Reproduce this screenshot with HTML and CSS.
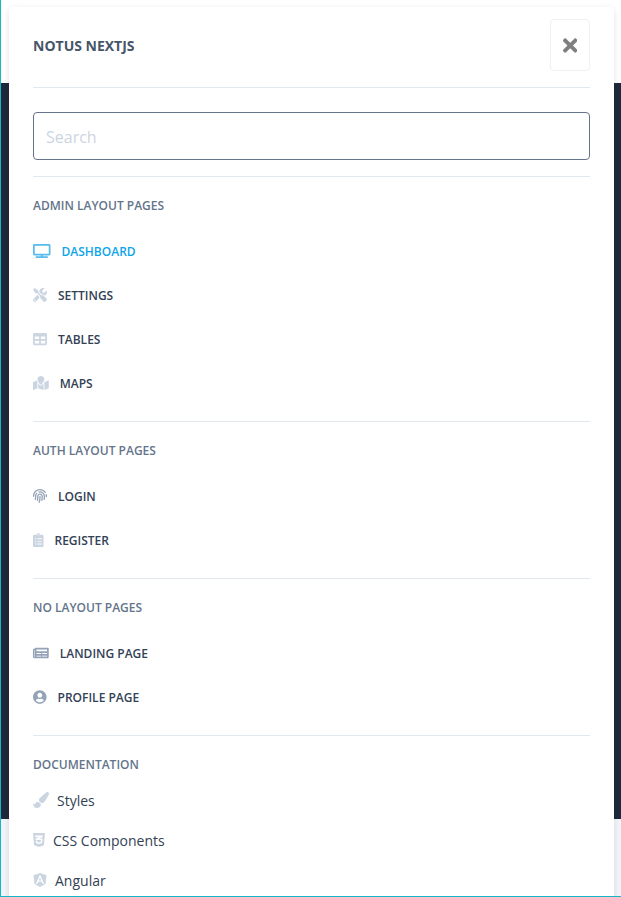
FILE: index.html
```html
<!DOCTYPE html>
<html lang="en">
<head>
<meta charset="utf-8">
<meta name="viewport" content="width=device-width, initial-scale=1">
<title>Notus NextJS</title>
<link rel="stylesheet" href="styles.css">
</head>
<body>
<div class="frame">
  <div class="topbar"></div>
  <div class="hero"></div>
  <nav class="panel" aria-label="Main">
    <header class="panel-header">
      <a class="brand" href="#">Notus NextJS</a>
      <button class="close" type="button" aria-label="Close menu">
        <svg viewBox="0 0 352 512"><path d="M242.72 256l100.07-100.07c12.28-12.28 12.28-32.19 0-44.48l-22.24-22.24c-12.28-12.28-32.19-12.28-44.48 0L176 189.28 75.93 89.21c-12.28-12.28-32.19-12.28-44.48 0L9.21 111.45c-12.28 12.28-12.28 32.19 0 44.48L109.28 256 9.21 356.07c-12.28 12.28-12.28 32.19 0 44.48l22.24 22.24c12.28 12.28 32.2 12.28 44.48 0L176 322.72l100.07 100.07c12.28 12.28 32.2 12.28 44.48 0l22.24-22.24c12.28-12.28 12.28-32.19 0-44.48L242.72 256z"/></svg>
      </button>
    </header>
    <form class="search">
      <input type="text" placeholder="Search" aria-label="Search">
    </form>

    <section class="group">
      <h6>Admin Layout Pages</h6>
      <ul class="links">
        <li><a class="active" href="#">
          <svg viewBox="0 0 640 512"><path d="M592 0H48A48 48 0 0 0 0 48v320a48 48 0 0 0 48 48h240v32H112a16 16 0 0 0-16 16v32a16 16 0 0 0 16 16h416a16 16 0 0 0 16-16v-32a16 16 0 0 0-16-16H352v-32h240a48 48 0 0 0 48-48V48a48 48 0 0 0-48-48zm-16 352H64V64h512z"/></svg>
          Dashboard</a></li>
        <li><a href="#">
          <svg viewBox="0 0 512 512"><path d="M501.1 395.7L384 278.6c-23.1-23.1-57.6-27.6-85.4-13.9L192 158.1V96L64 0 0 64l96 128h62.1l106.6 106.6c-13.6 27.8-9.2 62.3 13.9 85.4l117.1 117.1c14.6 14.6 38.2 14.6 52.7 0l52.7-52.7c14.5-14.6 14.5-38.2 0-52.7zM331.7 225c28.3 0 54.9 11 74.9 31l19.4 19.4c15.8-6.9 30.8-16.5 43.8-29.5 37.1-37.1 49.7-89.3 37.9-136.7-2.2-9-13.5-12.1-20.1-5.5l-74.4 74.4-67.9-11.3L334 98.9l74.4-74.4c6.6-6.6 3.4-17.9-5.7-20.2-47.4-11.7-99.6.9-136.6 37.9-28.5 28.5-41.9 66.1-41.2 103.6l82.1 82.1c8.1-1.9 16.5-2.9 24.7-2.9zm-103.9 82l-56.7-56.7L18.7 402.8c-25 25-25 65.5 0 90.5s65.5 25 90.5 0l123.6-123.6c-7.6-19.9-9.9-41.6-5-62.7zM64 472c-13.2 0-24-10.8-24-24 0-13.3 10.7-24 24-24s24 10.7 24 24c0 13.2-10.7 24-24 24z"/></svg>
          Settings</a></li>
        <li><a href="#">
          <svg viewBox="0 0 512 512"><path d="M464 32H48C21.49 32 0 53.49 0 80v352c0 26.51 21.49 48 48 48h416c26.51 0 48-21.49 48-48V80c0-26.51-21.49-48-48-48zM224 416H64v-96h160v96zm0-160H64v-96h160v96zm224 160H288v-96h160v96zm0-160H288v-96h160v96z"/></svg>
          Tables</a></li>
        <li><a href="#">
          <svg viewBox="0 0 576 512"><path d="M288 0c-69.59 0-126 56.41-126 126 0 56.26 82.35 158.8 113.9 196.02 6.39 7.54 17.82 7.54 24.2 0C331.65 284.8 414 182.26 414 126 414 56.41 357.59 0 288 0zM20.12 215.95A32.006 32.006 0 0 0 0 245.66v250.32c0 11.32 11.43 19.06 21.94 14.86L160 448V214.92c-8.84-15.98-16.07-31.54-21.25-46.42L20.12 215.95zM288 359.67c-14.07 0-27.38-6.18-36.51-16.96-19.66-23.2-40.57-49.62-59.49-76.72v182l192 64V266c-18.92 27.09-39.82 53.52-59.49 76.72-9.13 10.77-22.44 16.95-36.51 16.95zm266.06-198.51L416 224v288l139.88-55.95A31.996 31.996 0 0 0 576 426.34V176.02c0-11.32-11.43-19.06-21.94-14.86z"/></svg>
          Maps</a></li>
      </ul>
    </section>

    <section class="group">
      <h6>Auth Layout Pages</h6>
      <ul class="links">
        <li><a href="#">
          <svg class="strong" viewBox="0 0 512 512"><path d="M256.12 245.96c-13.25 0-24 10.74-24 24 1.14 72.25-8.14 141.9-27.7 211.55-2.73 9.72 2.15 30.49 23.12 30.49 10.48 0 20.11-6.92 23.09-17.52 13.53-47.91 31.04-125.41 29.48-224.52.01-13.25-10.73-24-23.99-24zm-.86-81.73C194 164.16 151.25 211.3 152.1 265.32c.75 47.94-3.75 95.91-13.37 142.55-2.69 12.98 5.67 25.69 18.64 28.36 13.05 2.67 25.67-5.66 28.36-18.64 10.34-50.09 15.17-101.58 14.37-153.02-.41-25.95 19.92-52.49 54.45-52.34 31.31.47 57.15 25.34 57.62 55.47.77 48.05-2.81 96.33-10.61 143.55-2.17 13.06 6.69 25.42 19.76 27.58 19.97 3.33 26.81-15.1 27.58-19.77 8.28-50.03 12.06-101.21 11.27-152.11-.88-55.8-47.94-101.88-104.91-102.72zm-110.69-19.78c-10.3-8.34-25.37-6.8-33.76 3.48-25.62 31.5-39.39 71.28-38.75 112 .59 37.58-2.47 75.27-9.11 112.05-2.34 13.05 6.31 25.53 19.36 27.89 20.11 3.5 27.07-14.81 27.89-19.36 7.19-39.84 10.5-80.66 9.86-121.33-.47-29.88 9.2-57.88 28-80.97 8.35-10.28 6.79-25.39-3.49-33.76zm109.47-62.33c-15.41-.41-30.87 1.44-45.78 4.97-12.89 3.06-20.87 15.98-17.83 28.89 3.06 12.89 16 20.83 28.89 17.83 11.05-2.61 22.47-3.77 34-3.69 75.43 1.13 137.73 61.5 138.88 134.58.59 37.88-1.28 76.11-5.58 113.63-1.5 13.17 7.95 25.08 21.11 26.58 16.72 1.95 25.51-11.88 26.58-21.11a929.06 929.06 0 0 0 5.89-119.85c-1.56-98.75-85.07-180.33-186.16-181.83zm252.07 121.45c-2.86-12.92-15.51-21.2-28.61-18.27-12.94 2.86-21.12 15.66-18.26 28.61 4.71 21.41 4.91 37.41 4.7 61.6-.11 13.27 10.55 24.09 23.8 24.2h.2c13.17 0 23.89-10.61 24-23.8.18-22.18.4-44.11-5.83-72.34zm-40.12-90.72C417.29 43.46 337.6 1.29 252.81.02 183.02-.82 118.47 24.91 70.46 72.94 24.09 119.37-.9 181.04.14 246.65l-.12 21.47c-.39 13.25 10.03 24.31 23.28 24.69.23.02.48.02.72.02 12.92 0 23.59-10.3 23.97-23.3l.16-23.64c-.83-52.5 19.16-101.86 56.28-139 38.76-38.8 91.34-59.67 147.68-58.86 69.45 1.03 134.73 35.56 174.62 92.39 7.61 10.86 22.56 13.45 33.42 5.86 10.84-7.62 13.46-22.59 5.84-33.43z"/></svg>
          Login</a></li>
        <li><a href="#">
          <svg viewBox="0 0 384 512"><path d="M336 64h-80c0-35.3-28.7-64-64-64s-64 28.7-64 64H48C21.5 64 0 85.5 0 112v352c0 26.5 21.5 48 48 48h288c26.5 0 48-21.5 48-48V112c0-26.5-21.5-48-48-48zM96 424c-13.3 0-24-10.7-24-24s10.7-24 24-24 24 10.7 24 24-10.7 24-24 24zm0-96c-13.3 0-24-10.7-24-24s10.7-24 24-24 24 10.7 24 24-10.7 24-24 24zm0-96c-13.3 0-24-10.7-24-24s10.7-24 24-24 24 10.7 24 24-10.7 24-24 24zm96-192c13.3 0 24 10.7 24 24s-10.7 24-24 24-24-10.7-24-24 10.7-24 24-24zm128 368c0 4.4-3.6 8-8 8H168c-4.4 0-8-3.6-8-8v-16c0-4.4 3.6-8 8-8h144c4.4 0 8 3.6 8 8v16zm0-96c0 4.4-3.6 8-8 8H168c-4.4 0-8-3.6-8-8v-16c0-4.4 3.6-8 8-8h144c4.4 0 8 3.6 8 8v16zm0-96c0 4.4-3.6 8-8 8H168c-4.4 0-8-3.6-8-8v-16c0-4.4 3.6-8 8-8h144c4.4 0 8 3.6 8 8v16z"/></svg>
          Register</a></li>
      </ul>
    </section>

    <section class="group">
      <h6>No Layout Pages</h6>
      <ul class="links">
        <li><a href="#">
          <svg class="strong" viewBox="0 0 576 512"><path d="M552 64H88c-13.255 0-24 10.745-24 24v8H24c-13.255 0-24 10.745-24 24v272c0 30.928 25.072 56 56 56h472c26.51 0 48-21.49 48-48V88c0-13.255-10.745-24-24-24zM56 400a8 8 0 0 1-8-8V144h16v248a8 8 0 0 1-8 8zm236-16H140c-6.627 0-12-5.373-12-12v-8c0-6.627 5.373-12 12-12h152c6.627 0 12 5.373 12 12v8c0 6.627-5.373 12-12 12zm208 0H348c-6.627 0-12-5.373-12-12v-8c0-6.627 5.373-12 12-12h152c6.627 0 12 5.373 12 12v8c0 6.627-5.373 12-12 12zm-208-96H140c-6.627 0-12-5.373-12-12v-8c0-6.627 5.373-12 12-12h152c6.627 0 12 5.373 12 12v8c0 6.627-5.373 12-12 12zm208 0H348c-6.627 0-12-5.373-12-12v-8c0-6.627 5.373-12 12-12h152c6.627 0 12 5.373 12 12v8c0 6.627-5.373 12-12 12zm0-96H140c-6.627 0-12-5.373-12-12v-40c0-6.627 5.373-12 12-12h360c6.627 0 12 5.373 12 12v40c0 6.627-5.373 12-12 12z"/></svg>
          Landing Page</a></li>
        <li><a href="#">
          <svg class="strong" viewBox="0 0 496 512"><path d="M248 8C111 8 0 119 0 256s111 248 248 248 248-111 248-248S385 8 248 8zm0 96c48.6 0 88 39.4 88 88s-39.4 88-88 88-88-39.4-88-88 39.4-88 88-88zm0 344c-58.7 0-111.3-26.6-146.5-68.2 18.8-35.4 55.6-59.8 98.5-59.8 2.4 0 4.8.4 7.1 1.1 13 4.2 26.6 6.9 40.9 6.9 14.3 0 28-2.7 40.9-6.9 2.3-.7 4.7-1.1 7.1-1.1 42.9 0 79.7 24.4 98.5 59.8C359.3 421.4 306.7 448 248 448z"/></svg>
          Profile Page</a></li>
      </ul>
    </section>

    <section class="group">
      <h6>Documentation</h6>
      <ul class="links docs">
        <li><a href="#">
          <svg viewBox="0 0 512 512"><path d="M167.02 309.34c-40.12 2.58-76.53 17.86-97.19 72.3-2.35 6.21-8 9.98-14.59 9.98-11.11 0-45.46-27.67-55.25-34.35C0 439.62 37.93 512 128 512c75.86 0 128-43.77 128-120.19 0-3.11-.65-6.08-.97-9.13l-88.01-73.34zM457.89 0c-15.16 0-29.37 6.71-40.21 16.45C213.27 199.05 192 203.34 192 257.09c0 13.7 3.25 26.76 8.73 38.7l63.82 53.18c7.21 1.8 14.64 3.03 22.39 3.03 62.11 0 98.11-45.47 211.16-256.46 7.38-14.35 13.9-29.85 13.9-45.99C512 20.64 486 0 457.89 0z"/></svg>
          Styles</a></li>
        <li><a href="#">
          <svg viewBox="0 0 384 512"><path d="M0 32l34.9 395.8L192 480l157.1-52.2L384 32H0zm313.1 80l-4.8 47.3L193 208.6l-.3.1h111.5l-12.8 146.6-98.2 28.7-98.8-29.2-6.4-73.9h48.9l3.2 38.3 52.6 13.3 54.7-15.4 3.7-61.6-166.3-.5v-.1l-.2.1-3.6-46.3L193.1 162l6.5-2.7H76.7L70.9 112h242.2z"/></svg>
          CSS Components</a></li>
        <li><a href="#">
          <svg viewBox="0 0 448 512"><path d="M185.7 268.1h76.2l-38.1-91.6-38.1 91.6zM223.8 32L16 106.4l31.8 275.7 176 97.9 176-97.9 31.8-275.7zM354 373.8h-48.6l-26.2-65.4H168.6l-26.2 65.4H93.7L223.8 81.5z"/></svg>
          Angular</a></li>
      </ul>
    </section>
  </nav>
</div>
</body>
</html>
```
FILE: styles.css
```css
*, *::before, *::after { box-sizing: border-box; }

body {
  margin: 0;
  font-family: "Segoe UI", "Open Sans", "Noto Sans", sans-serif;
  font-size: 16px;
  line-height: 24px;
  color: #334155;
}

.frame {
  position: relative;
  height: 100vh;
  overflow: hidden;
  background: #f1f5f9;
  border-left: 1px solid #14b8c4;
  border-bottom: 1px solid #14b8c4;
}

.topbar { height: 83px; background: #fff; }
.hero { height: 736px; background: #1e293b; }

.panel {
  position: absolute;
  top: 7px;
  left: 8px;
  right: 7px;
  padding: 12px 24px;
  background: #fff;
  border-radius: 4px;
  box-shadow: 0 2px 6px rgba(0, 0, 0, 0.12);
}

.panel-header {
  display: flex;
  align-items: center;
  justify-content: space-between;
  padding-bottom: 16px;
  border-bottom: 1px solid #e2e8f0;
}

.brand {
  padding-top: 2px;
  font-size: 14px;
  font-weight: 700;
  text-transform: uppercase;
  text-decoration: none;
  color: #475569;
}

.close {
  display: flex;
  align-items: center;
  justify-content: center;
  width: 40px;
  height: 52px;
  padding: 0;
  border: 1px solid #f0f0f0;
  border-radius: 4px;
  background: transparent;
  color: #7f7f7f;
}

.close svg { height: 21px; fill: currentColor; }

.search { margin: 24px 0 16px; }

.search input {
  display: block;
  width: 100%;
  height: 48px;
  padding: 10px 12px 8px;
  border: 1px solid #64748b;
  border-radius: 4px;
  font: inherit;
  color: #334155;
}

.search input::placeholder { color: #cbd5e1; opacity: 1; }

.group {
  padding: 16px 0;
  border-top: 1px solid #e2e8f0;
}

h6 {
  margin: 0;
  padding: 5px 0 15px;
  font-size: 12px;
  line-height: 16px;
  font-weight: 600;
  text-transform: uppercase;
  color: #64748b;
}

.links { margin: 0; padding: 0; list-style: none; }

.links a {
  display: flex;
  align-items: center;
  gap: 11px;
  padding: 13px 0 11px;
  font-size: 12px;
  line-height: 20px;
  font-weight: 600;
  text-transform: uppercase;
  text-decoration: none;
  color: #334155;
}

.links svg { height: 14px; margin-bottom: 2px; fill: #cbd5e1; }
.links svg.strong { fill: #94a3b8; }
.links a.active { color: #0ea5e9; }
.links a.active svg { fill: #56bcee; }

.links.docs a {
  gap: 8px;
  padding: 1px 0 15px;
  font-size: 14px;
  line-height: 24px;
  font-weight: 400;
  text-transform: none;
}

.links.docs svg { height: 16px; }
```
